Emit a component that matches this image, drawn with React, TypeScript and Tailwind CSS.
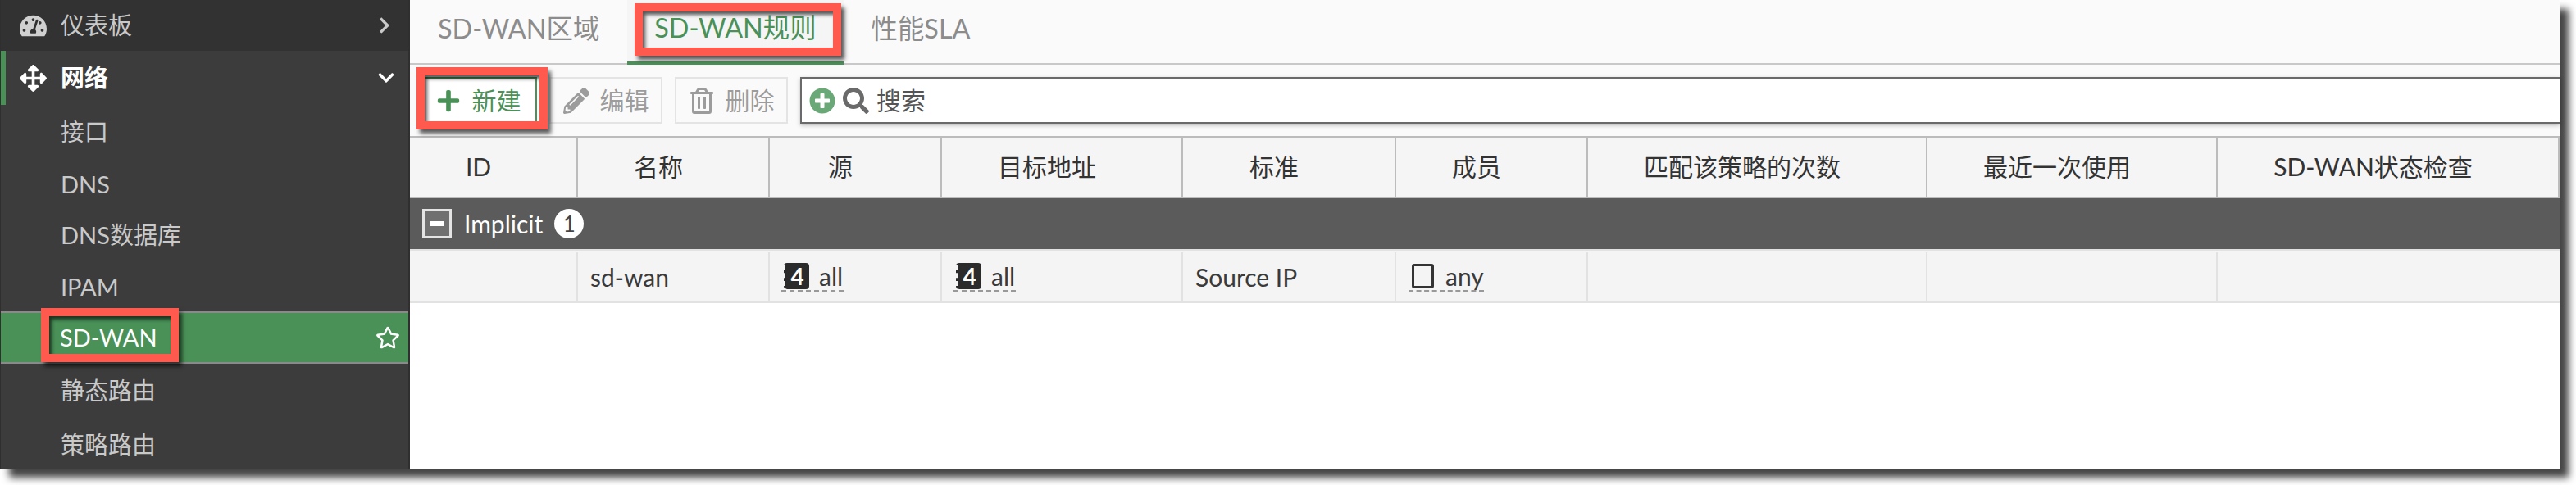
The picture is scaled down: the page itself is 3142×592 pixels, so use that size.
import {
  FaArrowsAlt,
  FaChevronDown,
  FaChevronRight,
  FaPencilAlt,
  FaPlus,
  FaPlusCircle,
  FaRegStar,
  FaRegTrashAlt,
  FaSearch,
  FaTachometerAlt,
} from "react-icons/fa";

const gridCols =
  "grid grid-cols-[205px_234px_210px_294px_260px_234px_414px_354px_1fr]";

const headers = [
  "ID",
  "名称",
  "源",
  "目标地址",
  "标准",
  "成员",
  "匹配该策略的次数",
  "最近一次使用",
  "SD-WAN状态检查",
];

const RedBox = ({ className }: { className: string }) => (
  <div
    className={`pointer-events-none absolute border-[10px] border-[#ff5a4d] shadow-[4px_5px_5px_rgba(0,0,0,0.65),inset_3px_4px_4px_rgba(0,0,0,0.65)] ${className}`}
  />
);

const SubItem = ({ label, h = "h-[62px]" }: { label: string; h?: string }) => (
  <div className={`flex items-center pl-[73px] text-[#c9c9c9] ${h}`}>{label}</div>
);

const AddressChip = () => (
  <span className="flex h-[36px] items-center border-b-2 border-dashed border-[#999] pl-[3px] pr-[1px]">
    <span className="flex h-[32px] w-[31px] items-center justify-center rounded-[4px] border-l-2 border-dashed border-l-[#f4f4f4] bg-[#2b2b2b] text-[28px] leading-none font-bold text-white">
      4
    </span>
    <span className="ml-[12px]">all</span>
  </span>
);

const ToolButton = ({
  icon,
  label,
  w,
}: {
  icon: React.ReactNode;
  label: string;
  w: string;
}) => (
  <div
    className={`flex h-[57px] items-center justify-center gap-[13px] border-2 border-[#e4e4e4] text-[#9c9c9c] ${w}`}
  >
    {icon}
    <span>{label}</span>
  </div>
);

export default function App() {
  return (
    <div className="h-[592px] w-[3142px] overflow-hidden bg-white">
      <div
        className="relative flex h-[572px] w-[3122px] bg-white text-[30px] shadow-[11px_11px_9px_#444]"
        style={{ fontFamily: '"Lato", "Noto Sans CJK SC", sans-serif' }}
      >
        {/* sidebar */}
        <div className="h-full w-[500px] shrink-0 border-r-2 border-l border-r-[#2f2f2f] border-l-[#2f2f2f] bg-[#3c3c3c] text-[29px]">
          <div className="flex h-[62px] items-center bg-[#323232] pr-[18px] pl-[23px] text-[#c9c9c9]">
            <FaTachometerAlt className="text-[33px] text-[#d0d0d0]" />
            <span className="ml-[17px]">仪表板</span>
            <FaChevronRight className="ml-auto text-[22px]" />
          </div>
          <div className="flex h-[66px] items-center border-l-[6px] border-[#4a9158] pr-[16px] pl-[17px] font-bold text-white">
            <FaArrowsAlt className="text-[33px]" />
            <span className="ml-[17px]">网络</span>
            <FaChevronDown className="ml-auto text-[22px]" />
          </div>
          <SubItem label="接口" h="h-[66px]" />
          <SubItem label="DNS" />
          <SubItem label="DNS数据库" />
          <SubItem label="IPAM" h="h-[62px] pt-[2px]" />
          <div className="flex h-[64px] items-center border-y-2 border-[#8a8a8a] bg-[#4a9158] pr-[10px] pl-[72px] text-white">
            SD-WAN
            <FaRegStar className="ml-auto text-[30px]" />
          </div>
          <SubItem label="静态路由" h="h-[66px]" />
          <SubItem label="策略路由" h="h-[66px]" />
        </div>

        {/* main */}
        <div className="min-w-0 flex-1">
          <div className="flex h-[79px] border-b-2 border-[#c8c8c8] bg-[#fafafa] text-[32.4px] text-[#8c8c8c]">
            <div className="flex h-[77px] items-center px-[34px] pb-[6px]">SD-WAN区域</div>
            <div className="flex h-[79px] items-center border-b-4 border-[#4a9158] bg-[#f5f5f5] px-[33px] pb-[6px] text-[#4a9158]">
              SD-WAN规则
            </div>
            <div className="flex h-[77px] items-center px-[34px] pb-[6px]">性能SLA</div>
          </div>

          <div className="flex h-[89px] items-center gap-[15px] border-b-2 border-[#bcbcbc] bg-[#fafafa] pl-[12px]">
            <div className="flex h-[57px] w-[143px] items-center justify-center gap-[14px] border-2 border-[#4a9158] bg-white text-[#4a9158]">
              <FaPlus className="text-[30px]" />
              <span>新建</span>
            </div>
            <ToolButton icon={<FaPencilAlt className="text-[32px]" />} label="编辑" w="w-[138px]" />
            <ToolButton icon={<FaRegTrashAlt className="text-[32px]" />} label="删除" w="w-[138px]" />
            <div className="flex h-[57px] flex-1 items-center border-y-2 border-l-2 border-[#6a6a6a] bg-white pl-[9px] text-[#555] shadow-[0_2px_5px_rgba(0,0,0,0.25)]">
              <FaPlusCircle className="text-[32px] text-[#6aa878]" />
              <FaSearch className="ml-[9px] text-[32px] text-[#6a6a6a]" />
              <span className="ml-[9px]">搜索</span>
            </div>
          </div>

          <div className={`${gridCols} h-[74px] border-r-2 border-b-2 border-[#bcbcbc] bg-[#f5f5f5] text-[#333]`}>
            {headers.map((h, i) => (
              <div
                key={h}
                className={`flex items-center justify-center pr-[36px] pb-[2px] ${i < headers.length - 1 ? "border-r-2 border-[#bcbcbc]" : ""}`}
              >
                {h}
              </div>
            ))}
          </div>

          <div className="flex h-[62px] items-center bg-[#5b5b5b] pl-[15px] text-white">
            <div className="flex h-[36px] w-[36px] items-center justify-center border-[3px] border-[#e4e4e4] bg-[#707070]">
              <div className="h-[6px] w-[17px] bg-white" />
            </div>
            <span className="ml-[15px]">Implicit</span>
            <span className="ml-[14px] flex h-[36px] w-[36px] items-center justify-center rounded-full bg-white text-[26px] text-[#444]">
              1
            </span>
          </div>

          <div className={`${gridCols} h-[66px] border-y-2 border-[#e2e2e2] bg-[#f4f4f4] pt-[2px] text-[#3a3a3a]`}>
            <div className="border-r-2 border-[#e2e2e2]" />
            <div className="flex items-center border-r-2 border-[#e2e2e2] pl-[15px]">sd-wan</div>
            <div className="flex items-center border-r-2 border-[#e2e2e2] pl-[14px]">
              <AddressChip />
            </div>
            <div className="flex items-center border-r-2 border-[#e2e2e2] pl-[14px]">
              <AddressChip />
            </div>
            <div className="flex items-center border-r-2 border-[#e2e2e2] pl-[15px]">Source IP</div>
            <div className="flex items-center border-r-2 border-[#e2e2e2] pl-[15px]">
              <span className="flex h-[36px] items-center border-b-2 border-dashed border-[#999] pl-[4px]">
                <span className="h-[30px] w-[27px] rounded-[3px] border-[3px] border-[#333]" />
                <span className="ml-[14px]">any</span>
              </span>
            </div>
            <div className="border-r-2 border-[#e2e2e2]" />
            <div className="border-r-2 border-[#e2e2e2]" />
            <div />
          </div>
        </div>

        {/* annotation boxes */}
        <RedBox className="top-[376px] left-[50px] h-[66px] w-[168px]" />
        <RedBox className="top-[4px] left-[774px] h-[64px] w-[252px]" />
        <RedBox className="top-[82px] left-[508px] h-[76px] w-[160px]" />
      </div>
    </div>
  );
}
